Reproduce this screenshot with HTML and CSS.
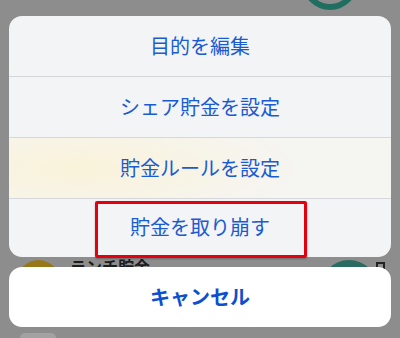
FILE: index.html
```html
<!DOCTYPE HTML>
<html>
    <head>
        <meta charset="UTF-8">
        <title>アクション</title>
        <link rel="stylesheet" href="styles.css">
    </head>
    <body>
        <div id="behind">
            <div class="ring"></div>
            <div class="dot yellow"></div>
            <div class="name">ランチ貯金</div>
            <div class="dot teal"></div>
            <div class="mark"></div>
            <div class="dot gray"></div>
        </div>

        <div id="sheet">
            <ul class="menu">
                <li>目的を編集</li>
                <li>シェア貯金を設定</li>
                <li class="tint">貯金ルールを設定</li>
                <li class="pick">貯金を取り崩す<span class="frame"></span></li>
            </ul>
            <div class="cancel">キャンセル</div>
        </div>
    </body>
</html>
```

FILE: styles.css
```css
html,body,ul,li{margin:0;padding:0;list-style:none;}
html{overflow:hidden;}
body{
    width:400px;
    height:338px;
    overflow:hidden;
    position:relative;
    background-color:#8d8d8d;
    font-family:"Noto Sans CJK JP","Noto Sans",sans-serif;
}
/* blurred page under the sheet */
#behind .ring{
    position:absolute;
    left:302px;
    top:-46px;
    width:44px;
    height:44px;
    border:6px solid #1f6e60;
    border-radius:50%;
}
#behind .dot{
    position:absolute;
    border-radius:50%;
}
#behind .yellow{
    left:17px;
    top:260px;
    width:43px;
    height:43px;
    background-color:#977717;
}
#behind .teal{
    left:320px;
    top:260px;
    width:58px;
    height:58px;
    background-color:#2a6b62;
}
#behind .gray{
    left:20px;
    top:333px;
    width:36px;
    height:5px;
    border-radius:18px 18px 0 0;
    background-color:#a2a2a2;
}
#behind .name{
    position:absolute;
    left:70px;
    top:254px;
    font-size:16px;
    font-weight:bold;
    color:#1d1d1d;
}
#behind .mark{
    position:absolute;
    left:376px;
    top:262px;
    width:5px;
    height:6px;
    border:2px solid #222;
    border-bottom:none;
}

#sheet{
    position:relative;
    padding:16px 9px 0;
    display:flex;
    flex-direction:column;
    gap:10px;
}
#sheet .menu{
    background-color:#f3f4f6;
    border-radius:13px;
}
#sheet .menu li{
    position:relative;
    height:60px;
    line-height:60px;
    text-align:center;
    font-size:20px;
    color:#1a5bd2;
    border-top:1px solid #d6d7da;
}
#sheet .menu li:first-child{
    border-top:none;
}
#sheet .menu li.tint{
    background:radial-gradient(ellipse 240px 60px at 70px 50%,#faf3da,#f5f5f2 95%);
}
#sheet .menu li.pick{
    height:58px;
    line-height:56px;
}
#sheet .menu li.pick .frame{
    position:absolute;
    left:86px;
    top:2px;
    width:206px;
    height:51px;
    border:3px solid #e5000f;
    border-radius:2px;
    box-shadow:0 1px 2px rgba(0,0,0,0.25);
}
#sheet .cancel{
    height:60px;
    line-height:60px;
    text-align:center;
    background-color:#fff;
    border-radius:13px;
    font-size:20px;
    font-weight:bold;
    color:#0c4fcf;
}
```
